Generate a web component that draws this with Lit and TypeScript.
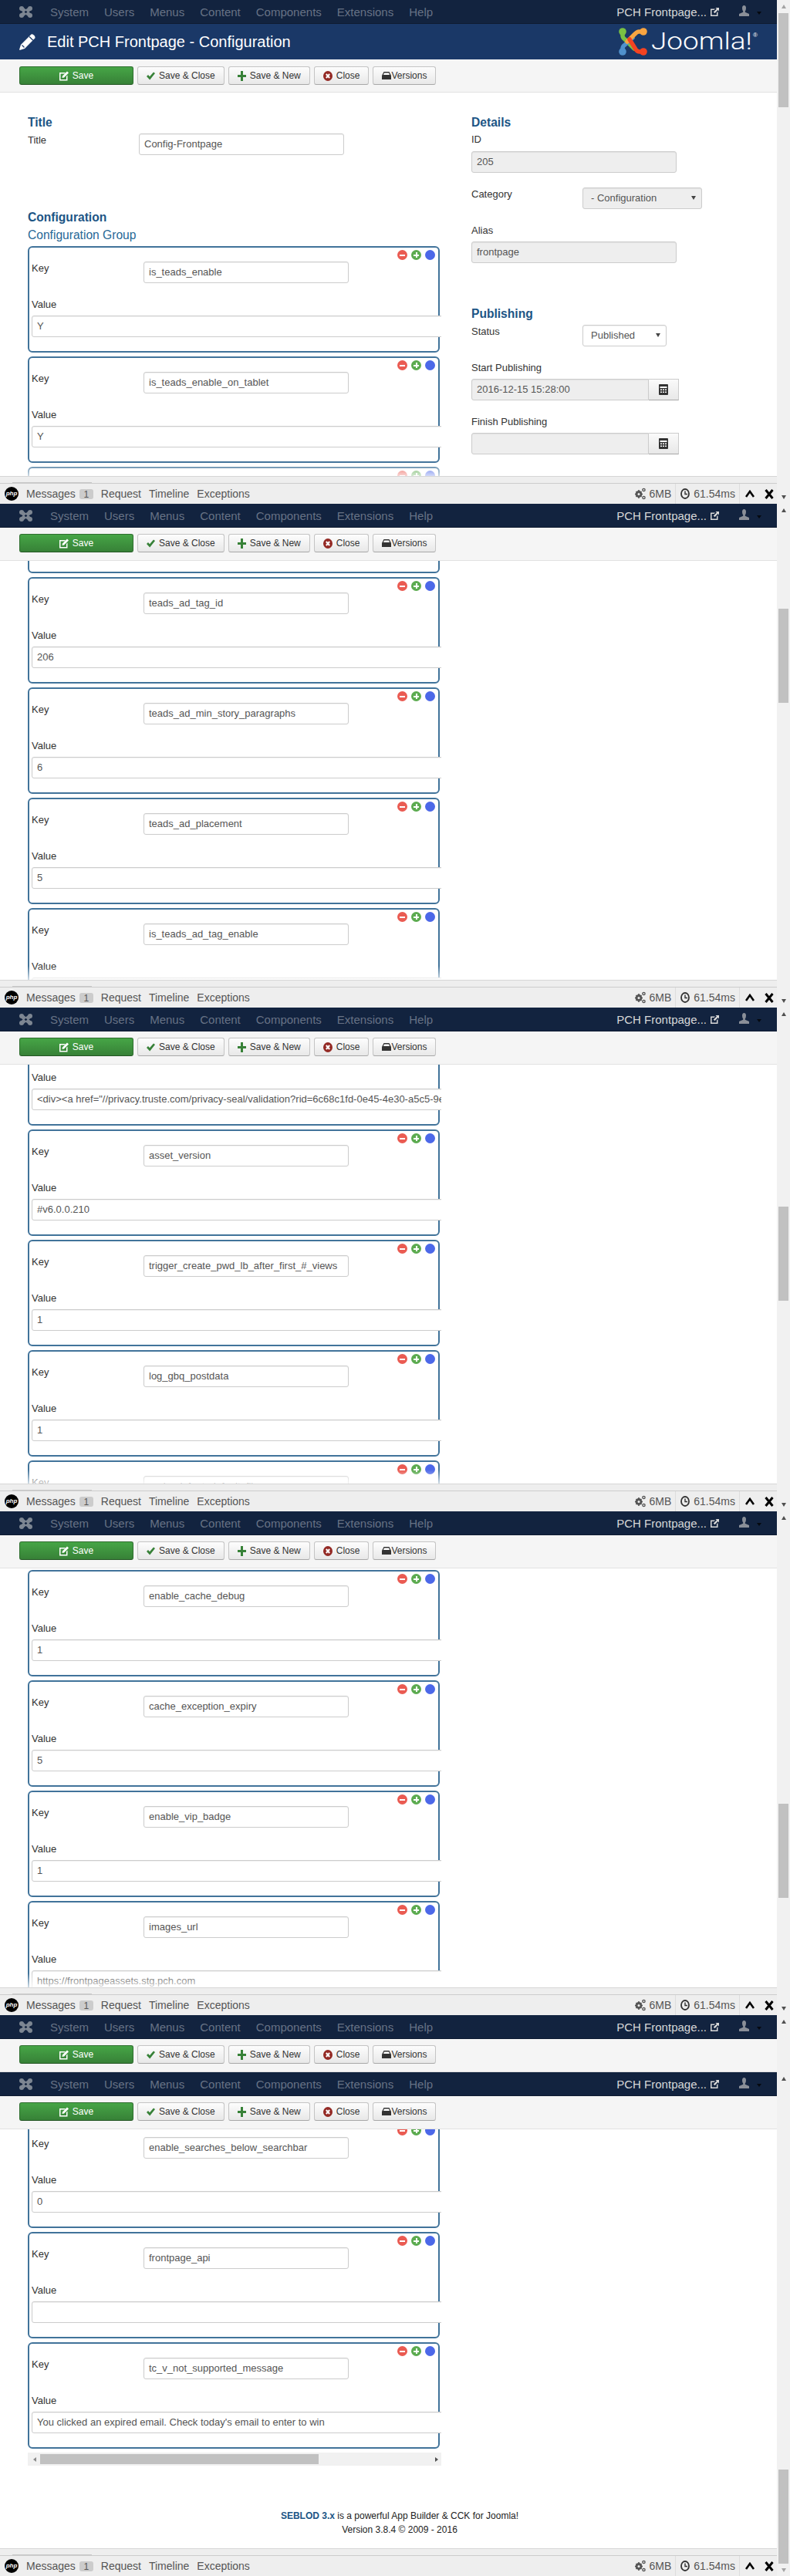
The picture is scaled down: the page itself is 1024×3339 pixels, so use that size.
import { LitElement, html, css } from "lit";
import { customElement } from "lit/decorators.js";

type Field = { key: string; value: string };

const menu = ["System", "Users", "Menus", "Content", "Components", "Extensions", "Help"];

const logo = (w: number, h: number, colors: string[]) => html`
  <svg width=${w} height=${h} viewBox="0 0 37 36" fill="none" stroke-width="5.5" stroke-linecap="round" stroke-linejoin="round">
    <path stroke=${colors[0]} d="M5 5 L5 10 Q5 13 8 15 L20 27" />
    <circle fill=${colors[0]} cx="5" cy="5" r="4.8" />
    <path stroke=${colors[2]} d="M5 31 L5 27 Q5 24 8 22 L18 13" />
    <circle fill=${colors[2]} cx="5" cy="31" r="4.8" />
    <path stroke=${colors[1]} d="M32 5 L26 5 Q24 5 21 8 L11 18" />
    <circle fill=${colors[1]} cx="32" cy="5" r="4.8" />
    <path stroke=${colors[3]} d="M32 31 L27 31 Q24 31 22 28 L14 15" />
    <circle fill=${colors[3]} cx="32" cy="31" r="4.8" />
  </svg>
`;

const navLogo = html`<svg width="17" height="15" viewBox="0 0 17 15">
  <path stroke="#7d8692" stroke-width="5" d="M3 3 L14 12 M14 3 L3 12" />
  <path stroke="#7d8692" stroke-width="2" d="M3 3 V6 M14 3 V6 M3 12 H6 M14 12 H11" />
  <circle fill="#7d8692" cx="3" cy="3" r="3" />
  <circle fill="#7d8692" cx="14" cy="3" r="3" />
  <circle fill="#7d8692" cx="3" cy="12" r="3" />
  <circle fill="#7d8692" cx="14" cy="12" r="3" />
  <path fill="#12233f" d="M8.5 5.8 L10.4 7.5 L8.5 9.2 L6.6 7.5 Z" />
</svg>`;

const pencil = html`<svg width="21" height="21" viewBox="0 0 21 21">
  <path fill="#fff" d="M15.5 0.5 Q17 0 18.5 1.2 L20 2.8 Q21 4.2 20.3 5.5 L7 19 L0.5 21 Q0 20.5 0.3 19.5 L2 14 Z" />
  <path stroke="#1a3867" stroke-width="1.2" d="M13 3.5 L17.8 8.2 M3.5 14.5 L6.5 17.5" />
</svg>`;

const saveIcon = html`<svg width="12" height="13" viewBox="0 0 12 13">
  <path fill="#fff" d="M0 2 H8 L6.5 3.5 H1.5 V11 H9 V7 L10.5 5.5 V12.5 H0 Z" />
  <path fill="#fff" d="M10 0.5 L12 2.5 L6 8.5 L3.5 9 L4 6.5 Z" />
</svg>`;

const checkIcon = html`<svg width="11" height="11" viewBox="0 0 11 11">
  <path fill="#378137" d="M0 6 L2 4 L4 6.2 L9 0.5 L11 2 L4.2 10.5 Z" />
</svg>`;

const plusIcon = html`<svg width="11" height="13" viewBox="0 0 11 13">
  <path fill="#378137" d="M4 0 H7 V5 H11 V8 H7 V13 H4 V8 H0 V5 H4 Z" />
</svg>`;

const closeIcon = html`<svg width="12" height="13" viewBox="0 0 12 13">
  <ellipse fill="#942a25" cx="6" cy="6.5" rx="6" ry="6.5" />
  <path stroke="#fff" stroke-width="2" d="M3.8 4 L8.2 9 M8.2 4 L3.8 9" />
</svg>`;

const archiveIcon = html`<svg width="12" height="10" viewBox="0 0 12 10">
  <path fill="#333" d="M2.5 0 H9.5 L12 5 V10 H0 V5 Z" />
  <path fill="#fff" d="M3 1.5 H9 L10 4 H2 Z" />
</svg>`;

const externalIcon = (color: string) => html`<svg width="11" height="11" viewBox="0 0 11 11">
  <path fill=${color} d="M0 1.5 H6 L4.5 3 H1.5 V9.5 H8 V6.5 L9.5 5 V11 H0 Z" />
  <path fill=${color} d="M6.5 0 H11 V4.5 L9.5 3 L5.5 7.2 L3.8 5.5 L8 1.5 Z" />
</svg>`;

const userIcon = html`<svg width="13" height="14" viewBox="0 0 13 14">
  <path fill="#8a8f98" d="M4 3.5 Q4 0 6.5 0 Q9 0 9 3.5 Q9 6 7.8 7.5 V8.8 L13 11 V14 H0 V11 L5.2 8.8 V7.5 Q4 6 4 3.5 Z" />
</svg>`;

const calendarIcon = html`<svg width="12" height="14" viewBox="0 0 12 14">
  <path fill="#333" d="M1 0 H11 Q12 0 12 1 V13 Q12 14 11 14 H1 Q0 14 0 13 V1 Q0 0 1 0 Z" />
  <path fill="#fff" d="M1.5 3 H10.5 V5 H1.5 Z M2 6.5 H4 V8 H2 Z M5 6.5 H7 V8 H5 Z M8 6.5 H10 V8 H8 Z M2 9.5 H4 V11 H2 Z M5 9.5 H7 V11 H5 Z M8 9.5 H10 V11 H8 Z" />
</svg>`;

const gearIcon = html`<svg width="14" height="16" viewBox="0 0 14 16">
  <circle cx="5" cy="8.5" r="3.2" fill="none" stroke="#555" stroke-width="2.4" />
  <path stroke="#555" stroke-width="1.6" d="M5 3 V14 M0 8.5 H10 M1.5 5 L8.5 12 M8.5 5 L1.5 12" />
  <circle cx="5" cy="8.5" r="1.5" fill="#eee" />
  <circle cx="11.5" cy="3" r="1.6" fill="none" stroke="#555" stroke-width="1.4" />
  <circle cx="11.5" cy="13" r="1.6" fill="none" stroke="#555" stroke-width="1.4" />
</svg>`;

const clockIcon = html`<svg width="12" height="14" viewBox="0 0 12 14">
  <ellipse cx="6" cy="7" rx="5" ry="6" fill="none" stroke="#333" stroke-width="1.8" />
  <path stroke="#333" stroke-width="1.4" fill="none" d="M6 3.5 V7.5 H9" />
</svg>`;

const chevronIcon = html`<svg width="12" height="10" viewBox="0 0 12 10">
  <path fill="none" stroke="#000" stroke-width="2.6" d="M1 9 L6 2 L11 9" />
</svg>`;

const crossIcon = html`<svg width="12" height="13" viewBox="0 0 12 13">
  <path fill="none" stroke="#000" stroke-width="3" d="M1.5 1 L10.5 12 M10.5 1 L1.5 12" />
</svg>`;

const phpIcon = html`<div class="php">php</div>`;

@customElement("app-root")
export class AppRoot extends LitElement {
  static styles = css`
    :host {
      display: block;
      width: 1024px;
      font-family: "Liberation Sans", Arial, sans-serif;
      font-size: 13px;
      color: #333;
      background: #fff;
    }

    .screen {
      display: grid;
      grid-template-columns: 1007px 17px;
      height: 653px;
    }
    .screen.short {
      height: 74px;
    }
    .main {
      display: flex;
      flex-direction: column;
      min-width: 0;
      overflow: hidden;
    }

    .scrollbar {
      display: flex;
      flex-direction: column;
      background: #f1f1f1;
    }
    .track {
      flex: 1;
      padding: 0 2px;
    }
    .thumb {
      background: #c1c1c1;
    }
    .arrow {
      flex: none;
      height: 17px;
      display: flex;
      align-items: center;
      justify-content: center;
    }
    .arrow i {
      width: 0;
      height: 0;
      border-left: 3.5px solid transparent;
      border-right: 3.5px solid transparent;
    }
    .arrow.up i {
      border-bottom: 5px solid #505050;
    }
    .arrow.down i {
      border-top: 5px solid #505050;
    }
    .arrow.pale i {
      border-top-color: #a3a3a3;
      border-bottom-color: #a3a3a3;
    }

    .nav {
      flex: none;
      display: flex;
      align-items: center;
      height: 31px;
      box-sizing: border-box;
      padding: 0 20px 0 25px;
      background: #12233f;
      border-bottom: 1px solid #0e1b31;
      font-size: 15px;
      color: #677285;
    }
    .nav .brand {
      display: flex;
      margin-right: 3px;
    }
    .nav .item {
      margin-left: 20px;
    }
    .nav .site {
      margin-left: auto;
      color: #d8d8d8;
    }
    .nav .ext {
      display: flex;
      margin-left: 5px;
    }
    .nav .user {
      display: flex;
      margin-left: 26px;
      margin-top: -3px;
    }
    .nav .caret {
      margin-left: 10px;
      width: 0;
      height: 0;
      border-left: 3.5px solid transparent;
      border-right: 3.5px solid transparent;
      border-top: 4px solid #05090f;
      margin-top: 3px;
    }

    .header {
      flex: none;
      display: flex;
      align-items: center;
      height: 46px;
      padding: 0 25px;
      background: #1a3867;
      color: #fff;
    }
    .header h1 {
      margin: 0 0 0 15px;
      font-size: 20px;
      font-weight: 400;
    }
    .brandmark {
      margin-left: auto;
      display: flex;
      align-items: center;
      gap: 5px;
    }
    .brandmark .word {
      display: block;
      width: 132px;
      font-family: Roboto, "Open Sans", sans-serif;
      font-weight: 300;
      font-size: 31px;
      line-height: 36px;
      color: #fff;
      white-space: nowrap;
      transform: scaleX(1.19);
      transform-origin: left center;
    }
    .brandmark sup {
      font-size: 8px;
      line-height: 8px;
      align-self: flex-start;
      margin: 6px 0 0 -5px;
    }

    .toolbar {
      flex: none;
      display: flex;
      gap: 5px;
      height: 43px;
      box-sizing: border-box;
      padding: 8px 0 0 25px;
      background: #f5f5f5;
      border-bottom: 1px solid #e2e2e2;
    }
    .toolbar.first {
      padding-top: 9px;
    }
    .btn {
      display: flex;
      align-items: center;
      gap: 5px;
      height: 24px;
      box-sizing: border-box;
      padding: 0 11px;
      font-size: 12px;
      color: #333;
      white-space: nowrap;
      background: linear-gradient(#fdfdfd, #e8e8e8);
      border: 1px solid #c4c4c4;
      border-bottom-color: #a8a8a8;
      border-radius: 3px;
    }
    .btn.save {
      width: 148px;
      justify-content: center;
      color: #fff;
      background: linear-gradient(#46a546, #378137);
      border-color: #2f6e2f;
      border-bottom-color: #245624;
    }
    .btn.tight {
      gap: 0;
    }

    .pane {
      flex: none;
      position: relative;
      height: 497px;
      overflow: hidden;
    }
    .fade {
      position: absolute;
      left: 0;
      right: 0;
      bottom: 0;
      height: 18px;
      background: linear-gradient(rgba(255, 255, 255, 0), rgba(255, 255, 255, 0.75));
    }

    .form {
      display: flex;
      padding: 30px 0 0 36px;
    }
    .left {
      width: 536px;
      flex: none;
      overflow: hidden;
    }
    .right {
      margin-left: 39px;
    }
    .heading {
      height: 18px;
      line-height: 18px;
      font-size: 15.6px;
      font-weight: 700;
      color: #1c5585;
    }
    .group {
      margin-top: 5px;
      height: 18px;
      line-height: 18px;
      font-size: 15.6px;
      color: #276896;
    }
    .row {
      display: flex;
    }
    .row .label {
      width: 144px;
      flex: none;
    }
    .label {
      height: 17px;
      line-height: 17px;
    }
    .input {
      box-sizing: border-box;
      width: 266px;
      height: 28px;
      line-height: 26px;
      padding: 0 6px;
      color: #555;
      background: #fff;
      border: 1px solid #ccc;
      border-radius: 3px;
      box-shadow: inset 0 1px 1px rgba(0, 0, 0, 0.06);
      white-space: nowrap;
      overflow: hidden;
    }
    .input.off {
      background: #eee;
    }
    .stack-label {
      margin-top: 19px;
    }
    .stack-input {
      margin-top: 6px;
    }
    .select {
      position: relative;
      padding-left: 10px;
    }
    .select::after {
      content: "";
      position: absolute;
      right: 7px;
      top: 10px;
      border-left: 3px solid transparent;
      border-right: 3px solid transparent;
      border-top: 5px solid #444;
    }
    .category {
      width: 155px;
    }
    .status {
      width: 109px;
    }
    .date {
      display: flex;
    }
    .date .input {
      width: 230px;
      border-radius: 3px 0 0 3px;
    }
    .calendar {
      width: 39px;
      height: 28px;
      box-sizing: border-box;
      display: flex;
      align-items: center;
      justify-content: center;
      background: linear-gradient(#fafafa, #e8e8e8);
      border: 1px solid #ccc;
      border-left: none;
      border-bottom-color: #a8a8a8;
    }

    .clip {
      position: relative;
      margin-left: 36px;
      width: 536px;
      overflow: hidden;
      flex: none;
    }
    .cards {
      display: flex;
      flex-direction: column;
      gap: 5px;
    }
    .left .cards {
      margin-top: 5px;
    }
    .card {
      flex: none;
      box-sizing: border-box;
      width: 534px;
      height: 138px;
      padding: 3px 0 0 3px;
      border: 2px solid #41739a;
      border-radius: 6px;
    }
    .tools {
      display: flex;
      justify-content: flex-end;
      gap: 5px;
      height: 13px;
      padding-right: 4px;
    }
    .tool {
      width: 13px;
      height: 13px;
      border-radius: 50%;
      display: flex;
      align-items: center;
      justify-content: center;
    }
    .tool.minus {
      background: #ea5b52;
    }
    .tool.plus {
      position: relative;
      background: #5cab50;
    }
    .tool.move {
      background: #4c68e8;
    }
    .tool b {
      display: block;
      width: 7px;
      height: 2px;
      background: #fff;
    }
    .tool.plus::after {
      content: "";
      position: absolute;
      left: 5.5px;
      top: 3px;
      width: 2px;
      height: 7px;
      background: #fff;
    }
    .keyrow {
      display: flex;
      margin-top: 2px;
    }
    .keyrow .label {
      width: 145px;
      flex: none;
    }
    .valueinput {
      position: relative;
      width: 620px;
    }

    .hscroll {
      flex: none;
      margin: 4px 0 0 36px;
      width: 536px;
      height: 17px;
      display: flex;
      align-items: center;
      background: #f1f1f1;
    }
    .hscroll .start {
      margin-left: 7px;
      border-top: 3.5px solid transparent;
      border-bottom: 3.5px solid transparent;
      border-right: 4px solid #8a8a8a;
    }
    .hscroll .bar {
      margin-left: 5px;
      width: 361px;
      height: 13px;
      background: #c1c1c1;
    }
    .hscroll .end {
      margin-left: auto;
      margin-right: 4px;
      border-top: 3.5px solid transparent;
      border-bottom: 3.5px solid transparent;
      border-left: 4px solid #505050;
    }

    .footer {
      flex: none;
      height: 107px;
      box-sizing: border-box;
      padding: 56px 0 0 29px;
      text-align: center;
      font-size: 12px;
      line-height: 18px;
      color: #222;
    }
    .footer b {
      font-weight: 700;
      color: #1c5585;
    }

    .strip {
      flex: none;
      height: 10px;
      box-sizing: border-box;
      display: flex;
      align-items: flex-end;
      background: #eee;
      border-top: 1px solid #d6d6d6;
      border-bottom: 1px solid #ccc;
    }
    .strip i {
      display: block;
      width: 103px;
      height: 1px;
      margin-left: 16px;
      background: #c8c8c8;
    }
    .debug {
      flex: none;
      display: flex;
      align-items: center;
      gap: 10px;
      height: 26px;
      padding-left: 6px;
      background: #eee;
      font-size: 14px;
      color: #555;
      white-space: nowrap;
    }
    .php {
      width: 18px;
      height: 18px;
      border-radius: 50%;
      background: #000;
      color: #fff;
      font-size: 8px;
      font-style: italic;
      font-weight: 700;
      line-height: 18px;
      text-align: center;
    }
    .badge {
      margin-left: -5px;
      width: 18px;
      height: 13px;
      line-height: 14px;
      text-align: center;
      font-size: 12px;
      background: #ccc;
      border-radius: 3px;
    }
    .stats {
      margin-left: auto;
      display: flex;
      align-items: center;
      height: 26px;
      padding-right: 4px;
    }
    .cell {
      display: flex;
      align-items: center;
      gap: 5px;
      height: 26px;
      padding-right: 5px;
      margin-right: 6px;
      border-right: 1px solid #ddd;
    }
    .cell.end {
      margin-right: 7px;
    }
    .stats .chev {
      display: flex;
      margin-right: 13px;
    }
    .stats .cross {
      display: flex;
    }
  `;

  private nav() {
    return html`<div class="nav">
      <span class="brand">${navLogo}</span>
      ${menu.map((m) => html`<span class="item">${m}</span>`)}
      <span class="site">PCH Frontpage...</span>
      <span class="ext">${externalIcon("#d8d8d8")}</span>
      <span class="user">${userIcon}</span>
      <span class="caret"></span>
    </div>`;
  }

  private toolbar(first = false) {
    return html`<div class="toolbar ${first ? "first" : ""}">
      <div class="btn save">${saveIcon}<span>Save</span></div>
      <div class="btn">${checkIcon}<span>Save &amp; Close</span></div>
      <div class="btn">${plusIcon}<span>Save &amp; New</span></div>
      <div class="btn">${closeIcon}<span>Close</span></div>
      <div class="btn tight">${archiveIcon}<span>Versions</span></div>
    </div>`;
  }

  private debug() {
    return html`<div class="strip"><i></i></div>
      <div class="debug">
        ${phpIcon}
        <span>Messages</span><span class="badge">1</span>
        <span>Request</span><span>Timeline</span><span>Exceptions</span>
        <div class="stats">
          <div class="cell">${gearIcon}<span>6MB</span></div>
          <div class="cell end">${clockIcon}<span>61.54ms</span></div>
          <span class="chev">${chevronIcon}</span>
          <span class="cross">${crossIcon}</span>
        </div>
      </div>`;
  }

  private card(f: Field) {
    return html`<div class="card">
      <div class="tools">
        <span class="tool minus"><b></b></span>
        <span class="tool plus"><b></b></span>
        <span class="tool move"></span>
      </div>
      <div class="keyrow">
        <div class="label">Key</div>
        <div class="input">${f.key}</div>
      </div>
      <div class="label stack-label">Value</div>
      <div class="input stack-input valueinput">${f.value}</div>
    </div>`;
  }

  // a scrolled view of the repeater: offset is how far the list starts from the window top
  private cards(fields: Field[], offset: number, height: number, fade = true) {
    return html`<div class="clip" style="height:${height}px">
      <div class="cards" style="margin-top:${offset}px">${fields.map((f) => this.card(f))}</div>
      ${fade ? html`<div class="fade"></div>` : ""}
    </div>`;
  }

  private scrollbar(top: number, opts: { upPale?: boolean; downPale?: boolean; down?: boolean; thumb?: boolean } = {}) {
    const { upPale = false, downPale = false, down = true, thumb = true } = opts;
    return html`<div class="scrollbar">
      <div class="arrow up ${upPale ? "pale" : ""}"><i></i></div>
      <div class="track">
        ${thumb ? html`<div class="thumb" style="margin-top:${top}px;height:122px"></div>` : ""}
      </div>
      ${down ? html`<div class="arrow down ${downPale ? "pale" : ""}"><i></i></div>` : ""}
    </div>`;
  }

  private firstPane() {
    return html`<div class="pane">
      <div class="form">
        <div class="left">
          <div class="heading">Title</div>
          <div class="row" style="margin-top:5px">
            <div class="label">Title</div>
            <div class="input">Config-Frontpage</div>
          </div>
          <div class="heading" style="margin-top:72px">Configuration</div>
          <div class="group">Configuration Group</div>
          <div class="cards">
            ${this.card({ key: "is_teads_enable", value: "Y" })}
            ${this.card({ key: "is_teads_enable_on_tablet", value: "Y" })}
            ${this.card({ key: "", value: "" })}
          </div>
        </div>
        <div class="right">
          <div class="heading">Details</div>
          <div class="label" style="margin-top:4px">ID</div>
          <div class="input off" style="margin-top:7px">205</div>
          <div class="row stack-label">
            <div class="label">Category</div>
            <div class="input off select category">- Configuration</div>
          </div>
          <div class="label stack-label">Alias</div>
          <div class="input off stack-input">frontpage</div>
          <div class="heading" style="margin-top:57px">Publishing</div>
          <div class="row" style="margin-top:5px">
            <div class="label">Status</div>
            <div class="input select status">Published</div>
          </div>
          <div class="label stack-label">Start Publishing</div>
          <div class="date stack-input">
            <div class="input off">2016-12-15 15:28:00</div>
            <div class="calendar">${calendarIcon}</div>
          </div>
          <div class="label stack-label">Finish Publishing</div>
          <div class="date stack-input">
            <div class="input off"></div>
            <div class="calendar">${calendarIcon}</div>
          </div>
        </div>
      </div>
      <div class="fade"></div>
    </div>`;
  }

  render() {
    return html`
      <div class="screen">
        <div class="main">
          ${this.nav()}
          <div class="header">
            ${pencil}
            <h1>Edit PCH Frontpage - Configuration</h1>
            <div class="brandmark">
              ${logo(37, 36, ["#7ac143", "#f9a541", "#5091cd", "#f44321"])}
              <span class="word">Joomla!</span>
              <sup>®</sup>
            </div>
          </div>
          ${this.toolbar(true)} ${this.firstPane()} ${this.debug()}
        </div>
        ${this.scrollbar(0, { upPale: true })}
      </div>

      <div class="screen">
        <div class="main">
          ${this.nav()} ${this.toolbar()}
          ${this.cards(
            [
              { key: "", value: "" },
              { key: "teads_ad_tag_id", value: "206" },
              { key: "teads_ad_min_story_paragraphs", value: "6" },
              { key: "teads_ad_placement", value: "5" },
              { key: "is_teads_ad_tag_enable", value: "" },
            ],
            -122,
            543
          )}
          ${this.debug()}
        </div>
        ${this.scrollbar(119)}
      </div>

      <div class="screen">
        <div class="main">
          ${this.nav()} ${this.toolbar()}
          ${this.cards(
            [
              {
                key: "",
                value:
                  '<div><a href="//privacy.truste.com/privacy-seal/validation?rid=6c68c1fd-0e45-4e30-a5c5-9e',
              },
              { key: "asset_version", value: "#v6.0.0.210" },
              { key: "trigger_create_pwd_lb_after_first_#_views", value: "1" },
              { key: "log_gbq_postdata", value: "1" },
              { key: "preload_font_default_file", value: "" },
            ],
            -59,
            543
          )}
          ${this.debug()}
        </div>
        ${this.scrollbar(241)}
      </div>

      <div class="screen">
        <div class="main">
          ${this.nav()} ${this.toolbar()}
          ${this.cards(
            [
              { key: "enable_cache_debug", value: "1" },
              { key: "cache_exception_expiry", value: "5" },
              { key: "enable_vip_badge", value: "1" },
              { key: "images_url", value: "https://frontpageassets.stg.pch.com" },
            ],
            2,
            543
          )}
          ${this.debug()}
        </div>
        ${this.scrollbar(362)}
      </div>

      <div class="screen short">
        <div class="main">${this.nav()} ${this.toolbar()}</div>
        ${this.scrollbar(0, { down: false, thumb: false })}
      </div>

      <div class="screen">
        <div class="main">
          ${this.nav()} ${this.toolbar()}
          ${this.cards(
            [
              { key: "enable_searches_below_searchbar", value: "0" },
              { key: "frontpage_api", value: "" },
              { key: "tc_v_not_supported_message", value: "You clicked an expired email. Check today's email to enter to win" },
            ],
            -10,
            415,
            false
          )}
          <div class="hscroll"><i class="start"></i><div class="bar"></div><i class="end"></i></div>
          <div class="footer">
            <div><b>SEBLOD 3.x</b> is a powerful App Builder &amp; CCK for Joomla!</div>
            <div>Version 3.8.4 © 2009 - 2016</div>
          </div>
          ${this.debug()}
        </div>
        ${this.scrollbar(498, { downPale: true })}
      </div>
    `;
  }
}
